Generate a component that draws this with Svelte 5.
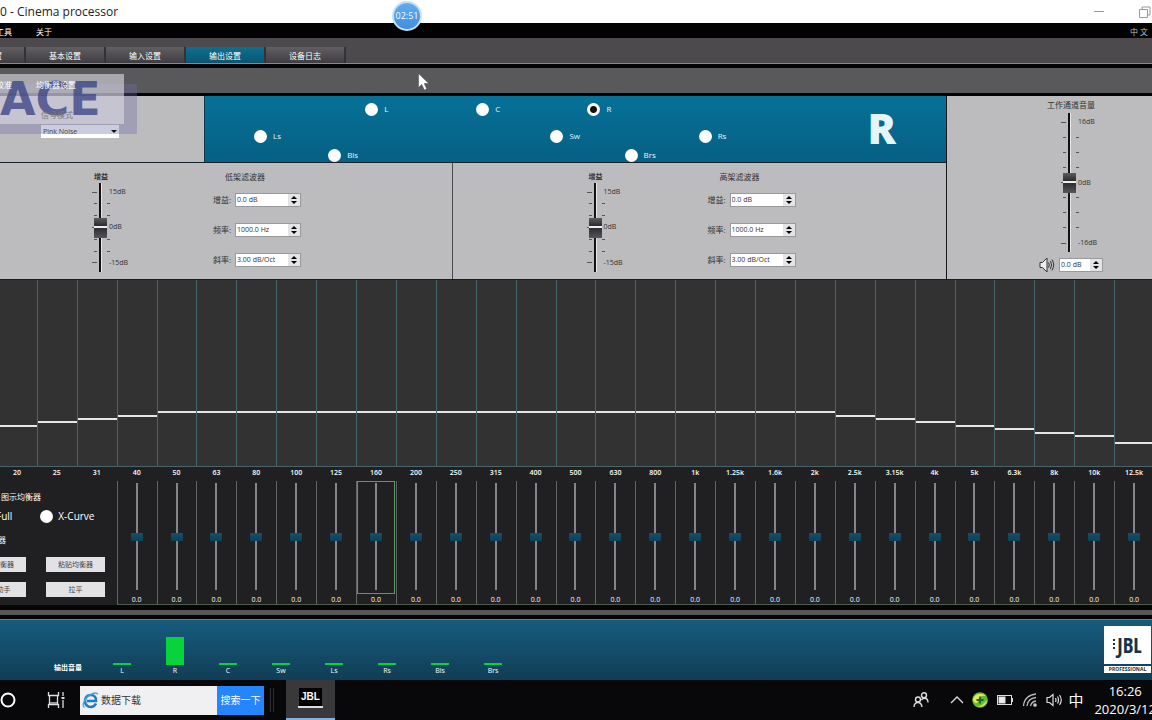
<script lang="ts">
	type Channel = { name: string; col: number; row: number };

	const tabs = ['基本设置', '输入设置', '输出设置', '设备日志'];
	let activeTab = $state('输出设置');

	const channels: Channel[] = [
		{ name: 'L', col: 5, row: 1 },
		{ name: 'C', col: 8, row: 1 },
		{ name: 'R', col: 11, row: 1 },
		{ name: 'Ls', col: 2, row: 2 },
		{ name: 'Sw', col: 10, row: 2 },
		{ name: 'Rs', col: 14, row: 2 },
		{ name: 'Bls', col: 4, row: 3 },
		{ name: 'Brs', col: 12, row: 3 },
	];
	let channel = $state('R');
	let curve = $state('');

	const filters = [
		{ id: 'low', title: '低架滤波器' },
		{ id: 'high', title: '高架滤波器' },
	];
	const fields = [
		{ label: '增益:', value: '0.0 dB' },
		{ label: '频率:', value: '1000.0 Hz' },
		{ label: '斜率:', value: '3.00 dB/Oct' },
	];
	const shelfScale = ['15dB', '', '', '0dB', '', '', '-15dB'];
	const volumeScale = ['16dB', '', '', '', '0dB', '', '', '', '-16dB'];

	const freqs = [
		'20', '25', '31', '40', '50', '63', '80', '100', '125', '160',
		'200', '250', '315', '400', '500', '630', '800', '1k', '1.25k', '1.6k',
		'2k', '2.5k', '3.15k', '4k', '5k', '6.3k', '8k', '10k', '12.5k',
	];
	const levels = [
		-4, -3, -2, -1, 0, 0, 0, 0, 0, 0,
		0, 0, 0, 0, 0, 0, 0, 0, 0, 0,
		0, -1, -2, -3, -4, -5, -6, -7, -9,
	];
	let bands = $state(freqs.slice(3).map((freq) => ({ freq, gain: 0 })));
	let selected = $state('160');

	const meters = [
		{ name: 'L', level: 2 },
		{ name: 'R', level: 28 },
		{ name: 'C', level: 2 },
		{ name: 'Sw', level: 2 },
		{ name: 'Ls', level: 2 },
		{ name: 'Rs', level: 2 },
		{ name: 'Bls', level: 2 },
		{ name: 'Brs', level: 2 },
	];

	// 0 dB sits at 29.5% of the plot height
	function levelHeight(db: number) {
		return 29.5 + db * 1.85;
	}
</script>

{#snippet fader(label: string, scale: string[], max: number)}
	<div class="fader">
		<div class="ticks left">
			{#each scale as mark}
				<div class="tick-row"><i class="tick" class:major={mark}></i></div>
			{/each}
		</div>
		<input type="range" class="fader-input" class:tall={max === 16} aria-label={label} min={-max} {max} value="0" />
		<div class="ticks">
			{#each scale as mark}
				<div class="tick-row"><i class="tick" class:major={mark}></i><span>{mark}</span></div>
			{/each}
		</div>
	</div>
{/snippet}

{#snippet spin(id: string, value: string)}
	<div class="spin">
		<input type="text" {id} {value} />
		<div class="spin-btns">
			<button aria-label="+"><svg viewBox="0 0 6 3"><path d="M0 3L3 0L6 3Z" /></svg></button>
			<button aria-label="-"><svg viewBox="0 0 6 3"><path d="M0 0L3 3L6 0Z" /></svg></button>
		</div>
	</div>
{/snippet}

<div class="window">
	<header class="titlebar">
		<span>0 - Cinema processor</span>
		<div class="win-btns">
			<button aria-label="最小化"><svg width="12" height="12" viewBox="0 0 12 12"><path d="M1 5.5H11" /></svg></button>
			<button aria-label="还原"><svg width="12" height="12" viewBox="0 0 12 12"><path d="M.5 3.5H8.500V11.500H.5ZM3 3V1H11V9H9" /></svg></button>
		</div>
	</header>

	<nav class="menubar">
		<button>工具</button>
		<button>关于</button>
		<button class="lang">中 文</button>
	</nav>

	<nav class="tabs">
		<button class="tab first">置</button>
		{#each tabs as tab}
			<button class="tab" class:active={tab === activeTab} onclick={() => (activeTab = tab)}>{tab}</button>
		{/each}
	</nav>

	<nav class="subtabs">
		<button>校准</button>
		<button>均衡器设置</button>
	</nav>

	<div class="main">
		<div class="top">
			<section class="signal">
				<label for="signal">信号模式</label>
				<div class="combo">
					<select id="signal"><option>Pink Noise</option></select>
					<svg width="6" height="3" viewBox="0 0 6 3"><path d="M0 0L3 3L6 0Z" /></svg>
				</div>
			</section>
			<section class="channels">
				{#each channels as ch}
					<label class="channel" style="grid-area: {ch.row} / {ch.col} / auto / span 3">
						<input type="radio" name="channel" value={ch.name} bind:group={channel} />
						{ch.name}
					</label>
				{/each}
				<strong class="current">{channel}</strong>
			</section>
		</div>

		<div class="filters">
			{#each filters as f}
				<section class="filter">
					<div class="gain">
						<h3>增益</h3>
						{@render fader('增益', shelfScale, 15)}
					</div>
					<div class="shelf">
						<h2>{f.title}</h2>
						{#each fields as field, i}
							<div class="field">
								<label for="{f.id}-{i}">{field.label}</label>
								{@render spin(`${f.id}-${i}`, field.value)}
							</div>
						{/each}
					</div>
				</section>
			{/each}
		</div>

		<section class="volume">
			<h2>工作通道音量</h2>
			{@render fader('工作通道音量', volumeScale, 16)}
			<div class="volume-row">
				<label for="volume" aria-label="音量">
					<svg width="16" height="16" viewBox="0 0 16 16" fill="none" stroke="#333">
						<path d="M1 5.500H3.500L8 1V15L3.500 10.500H1Z" fill="#eee" />
						<path d="M9.500 5.500Q11 8 9.500 10.500M11.500 4Q13.500 8 11.500 12M13 2.500Q16.500 8 13 13.500" />
					</svg>
				</label>
				{@render spin('volume', '0.0 dB')}
			</div>
		</section>
	</div>

	<div class="plot bands-grid">
		{#each levels as db}
			<div class="plot-col"><div class="level" style="height: {levelHeight(db)}%"></div></div>
		{/each}
	</div>

	<div class="eq">
		<div class="freqs bands-grid">
			{#each freqs as freq}
				<span>{freq}</span>
			{/each}
		</div>
		<div class="bands-grid">
			<section class="eq-panel">
				<h2>图示均衡器</h2>
				<div class="curves">
					<label><input type="radio" name="curve" value="full" bind:group={curve} />Full</label>
					<label><input type="radio" name="curve" value="x" bind:group={curve} />X-Curve</label>
				</div>
				<h2 class="cut">均衡器</h2>
				<div class="eq-btns">
					<button>复制均衡器</button>
					<button>粘贴均衡器</button>
					<button>均衡助手</button>
					<button>拉平</button>
				</div>
			</section>
			{#each bands as band}
				<div class="band">
					<div class="band-box" class:selected={band.freq === selected}>
						<input
							type="range"
							class="band-input"
							aria-label={band.freq}
							min="-6"
							max="6"
							step="0.5"
							bind:value={band.gain}
							onfocus={() => (selected = band.freq)}
						/>
					</div>
					<output>{band.gain.toFixed(1)}</output>
				</div>
			{/each}
		</div>
	</div>

	<div class="divider"></div>

	<footer class="output">
		<strong>输出音量</strong>
		<div class="meters">
			{#each meters as m}
				<div class="meter">
					<div class="meter-bar" style="height: {m.level}px"></div>
					<span>{m.name}</span>
				</div>
			{/each}
		</div>
		<div class="brand">
			<div class="brand-name">
				<i class="dots"></i>JBL
			</div>
			<div class="brand-sub">PROFESSIONAL</div>
		</div>
	</footer>

	<div class="taskbar">
		<button class="cortana" aria-label="Cortana">
			<svg width="16" height="16" viewBox="0 0 16 16"><circle cx="8" cy="8" r="6.500" fill="none" stroke="#fff" stroke-width="2" /></svg>
		</button>
		<button class="taskview" aria-label="任务视图">
			<svg width="18" height="18" viewBox="0 0 18 18" fill="none" stroke="#ddd" stroke-width="1.300">
				<path d="M1.500 1V4.500H11.500V1M1.500 17V13.500H11.500V17M2.500 4.500V13.500M10.500 4.500V13.500M16 1V5M16 9V17" />
				<path d="M14.500 7H17.500" stroke-width="2" />
				<path d="M3 12H10" stroke="#999" stroke-width="2" />
			</svg>
		</button>
		<form class="search" onsubmit={(e) => e.preventDefault()}>
			<svg width="17" height="17" viewBox="0 0 17 17" fill="none">
				<path d="M14 11.500C12.500 14.500 10.500 15 8.800 15C5.500 15 3 12.500 3 9C3 5.500 5.500 3 8.800 3C12.500 3 14.500 5.800 14 9H5" stroke="#1c7cc4" stroke-width="2.600" />
				<path d="M2.500 15.500C-.5 13.500 2.500 6.500 8 3C12 .5 15.500 .5 15.500 2.500" stroke="#45a9e0" stroke-width="1.400" />
			</svg>
			<input type="text" aria-label="搜索" value="数据下载" />
			<button>搜索一下</button>
		</form>
		<i class="grip"></i>
		<button class="app" aria-label="Cinema processor">
			<span class="app-icon">JBL</span>
			<i class="app-line"></i>
		</button>
		<div class="tray">
			<svg class="people" width="16" height="16" viewBox="0 0 16 16" fill="none" stroke="#ddd" stroke-width="1.400">
				<circle cx="5" cy="7.500" r="2.500" /><path d="M1 15C1 11.500 3 10.500 5 10.500S8.500 11.500 9 15" />
				<circle cx="11" cy="3.300" r="2.500" /><path d="M8.500 8C9.500 6.500 10.300 6.200 11.500 6.200C13.500 6.200 15 7.500 15 10.500" />
			</svg>
			<svg width="14" height="16" viewBox="0 0 14 16" fill="none" stroke="#ddd" stroke-width="1.300"><path d="M1 11L7 5L13 11" /></svg>
			<svg width="16" height="16" viewBox="0 0 16 16">
				<circle cx="8" cy="8" r="7.800" fill="#63bb35" />
				<path d="M1 8C1 3 9 -1 14 4C10 3 7 5 6 9C5 12 3 12 1 8Z" fill="#e6e85a" />
				<path d="M15.500 8C15 13 10 16 5 14.500C10 14 12 11 15.500 8Z" fill="#d8df47" />
				<path d="M8 4.500V11.500M4.500 8H11.500" stroke="#17652d" stroke-width="1.800" />
			</svg>
			<svg width="18" height="16" viewBox="0 0 18 16" fill="none" stroke="#ddd">
				<rect x="1.500" y="3.500" width="14" height="9" /><path d="M16.500 6V10" /><rect x="3" y="5" width="6" height="6" fill="#eee" />
			</svg>
			<svg width="16" height="16" viewBox="0 0 16 16" fill="none" stroke="#bbb" stroke-width="1.300">
				<path d="M1.500 14C2 7 7 2.500 14 2M5 14C5.500 9 9 6 14 5.500M8.500 14C9 11.500 10.500 9.500 14 9" /><circle cx="13" cy="13" r="1.200" fill="#eee" />
			</svg>
			<svg width="17" height="16" viewBox="0 0 17 16" fill="none" stroke="#ddd" stroke-width="1.200">
				<path d="M1 5.500H3.500L7 2.500V13.500L3.500 10.500H1ZM9.500 6Q10.500 8 9.500 10M11.500 4.500Q13.500 8 11.500 11.500M13.500 3Q17 8 13.500 13" />
			</svg>
			<span class="ime">中</span>
			<div class="clock"><span>16:26</span><span>2020/3/12</span></div>
		</div>
	</div>

	<div class="watermark"><div class="watermark-card">ACE</div></div>
	<div class="timer">02:51</div>
	<svg class="cursor" width="12" height="18" viewBox="0 0 12 18"><path d="M.5 .5V14.500L3.800 11.500L6.300 17L8.800 16L6.300 10.500H10.800Z" fill="#fff" stroke="#555" stroke-width=".6" /></svg>
</div>

<style>
	:global(body) {
		margin: 0;
		background: #08070a;
	}
	.window {
		position: relative;
		overflow: hidden;
		font-family: 'Open Sans', 'Noto Sans CJK SC', sans-serif;
		font-size: 8px;
		line-height: 12px;
		color: #fff;
	}
	.window :is(button, input, select) {
		box-sizing: border-box;
		margin: 0;
		padding: 0;
		border: 0;
		font: inherit;
		color: inherit;
		background: none;
	}
	h2, h3 {
		margin: 0;
		font-size: 8px;
		font-weight: 400;
	}
	h3 {
		font-size: 7px;
		font-weight: 700;
	}
	svg {
		display: block;
		flex-shrink: 0;
	}
	.titlebar {
		display: flex;
		justify-content: space-between;
		align-items: center;
		height: 23px;
		background: #fff;
		color: #222;
		font-size: 12px;
	}
	.win-btns {
		display: flex;
		gap: 34px;
		padding-right: 1px;
	}
	.win-btns svg {
		fill: none;
		stroke: #999;
	}
	.menubar {
		display: flex;
		align-items: center;
		gap: 24px;
		height: 13px;
		margin-left: -4px;
		padding-top: 2px;
		background: #020203;
	}
	.menubar .lang {
		margin-left: auto;
		padding-right: 4px;
		color: #a9c4c8;
	}
	.tabs {
		display: flex;
		align-items: flex-end;
		height: 25px;
		background: #4d4a4d;
		border-bottom: 1px solid #8a888a;
	}
	.window .tab {
		width: 80px;
		height: 16px;
		padding-top: 2px;
		border-right: 2px solid #343236;
		background: linear-gradient(#625f63, #3f3d41);
	}
	.window .tab.first {
		width: 26px;
		text-align: left;
		text-indent: -6px;
	}
	.window .tab.active {
		background: linear-gradient(#0f6f90, #0a5573);
	}
	.subtabs {
		display: flex;
		align-items: center;
		gap: 24px;
		height: 16px;
		padding-top: 9px;
		border-top: 4px solid #040404;
		border-bottom: 3px solid #040404;
		background: #59585a;
	}
	/* the texts stay readable above the translucent watermark */
	.subtabs button,
	.signal label,
	.combo select,
	.combo svg {
		position: relative;
		z-index: 1;
	}
	.subtabs button:first-child {
		margin-left: -4px;
	}

	.main {
		display: grid;
		grid-template-columns: minmax(0, 1fr) 206px;
		grid-template-rows: 67px 116px;
		background: #bcbbbd;
		color: #333;
		border-bottom: 1px solid #1b1b1e;
	}
	.top {
		display: grid;
		grid-template-columns: 204px 1fr;
		border-bottom: 1px solid #16222c;
	}
	.signal {
		padding: 13px 0 0 41px;
		color: #777;
	}
	.signal label {
		display: block;
		padding-bottom: 4px;
	}
	.combo {
		display: flex;
		align-items: center;
		width: 78px;
		height: 13px;
		background: #fff;
		color: #444;
		font-size: 7px;
	}
	.window .combo select {
		flex: 1;
		height: 13px;
		padding-left: 2px;
		appearance: none;
	}
	.combo svg {
		margin-right: 2px;
		fill: #111;
	}
	.channels {
		display: grid;
		grid-template-columns: repeat(20, minmax(0, 1fr));
		grid-template-rows: 26px 28px 10px;
		align-items: center;
		background: linear-gradient(#067197, #075f84);
		color: #e4f6fb;
		border-left: 1px solid #0c3c50;
	}
	.channel {
		display: flex;
		align-items: center;
		gap: 6px;
		padding-left: 12px;
	}
	.window input[type='radio'] {
		appearance: none;
		flex-shrink: 0;
		width: 13px;
		height: 13px;
		border-radius: 50%;
		background: #fff;
	}
	.window input[type='radio']:checked {
		background: radial-gradient(circle, #111 3px, #fff 4px);
	}
	.current {
		grid-area: 1 / 17 / 4 / 21;
		justify-self: end;
		padding-right: 50px;
		font-size: 42px;
		font-weight: 800;
		line-height: 42px;
	}

	.filters {
		grid-row: 2;
		display: grid;
		grid-template-columns: 1fr 1fr;
		margin-left: -43px;
	}
	.filter {
		display: grid;
		grid-template-columns: 121px auto;
		justify-content: start;
		padding: 8px 0 0 135px;
	}
	.filter + .filter {
		padding-left: 134px;
		border-left: 1px solid #4c4b50;
	}
	.gain h3 {
		padding-left: 2px;
	}
	.shelf h2 {
		padding: 0 0 10px 12px;
	}
	.field {
		display: flex;
		align-items: center;
		gap: 4px;
		height: 14px;
		margin-bottom: 16px;
	}
	.field:last-child {
		margin-bottom: 0;
	}
	.field label {
		width: 18px;
		white-space: nowrap;
	}
	.spin {
		display: flex;
		height: 14px;
		box-sizing: border-box;
		border: 1px solid #99989c;
		background: #fff;
		font-size: 7px;
	}
	.window .spin input {
		width: 52px;
		padding-left: 1px;
	}
	.spin-btns {
		display: flex;
		flex-direction: column;
		justify-content: center;
		gap: 2px;
		width: 12px;
		background: #e4e3e6;
	}
	.spin-btns button {
		display: flex;
		justify-content: center;
	}
	.spin-btns svg {
		width: 6px;
		height: 3px;
		fill: #000;
	}

	.fader {
		display: flex;
		font-size: 7px;
	}
	.ticks {
		display: flex;
		flex-direction: column;
		justify-content: space-between;
		width: 12px;
		padding: 4px 0;
	}
	.ticks.left {
		width: 5px;
		margin-right: -3px;
		align-items: flex-end;
	}
	.tick-row {
		display: flex;
		align-items: center;
		gap: 2px;
		height: 10px;
		white-space: nowrap;
	}
	.tick {
		width: 3px;
		height: 1px;
		background: #555;
	}
	.tick.major {
		width: 5px;
	}
	.window .fader-input {
		writing-mode: vertical-lr;
		direction: rtl;
		appearance: none;
		width: 13px;
		height: 89px;
		background: linear-gradient(90deg, #111 2px, #e8e8ea 2px) center / 3px 100% no-repeat;
	}
	.window .fader-input.tall {
		height: 139px;
	}
	.fader-input::-webkit-slider-thumb {
		appearance: none;
		width: 13px;
		height: 20px;
		background: linear-gradient(#5c5c60, #2b2b2e 8px, #eee 8px, #eee 10px, #2e2e31 10px, #55555a);
	}

	.volume {
		grid-area: 1 / 2 / 3 / 3;
		padding: 3px 0 0 92px;
		border-left: 1px solid #16161a;
	}
	.volume h2 {
		padding: 0 0 2px 8px;
	}
	.volume .fader {
		padding-left: 22px;
	}
	.volume-row {
		display: flex;
		align-items: center;
		gap: 4px;
		padding-top: 5px;
	}
	.window .volume-row input {
		width: 30px;
	}

	.bands-grid {
		display: grid;
		grid-template-columns: repeat(29, minmax(0, 1fr));
		margin: 0 -2px 0 -3px;
	}
	.plot {
		height: 186px;
		background: #323233;
		border-bottom: 1px solid #48646b;
	}
	.plot-col {
		display: flex;
		align-items: flex-end;
		border-left: 1px solid #46646c;
	}
	.level {
		flex: 1;
		box-sizing: border-box;
		border-top: 2px solid #e6e6e6;
	}
	.eq {
		background: #202023;
		font-size: 7px;
	}
	.freqs {
		height: 14px;
		text-align: center;
		font-weight: 600;
	}
	.eq-panel {
		grid-column: span 3;
		padding: 10px 0 0 4px;
		overflow: hidden;
	}
	.curves {
		display: flex;
		gap: 28px;
		margin: 5px 0 10px -23px;
		font-size: 10px;
		line-height: 16px;
	}
	.curves label {
		display: flex;
		align-items: center;
		gap: 5px;
	}
	.cut {
		margin-left: -19px;
	}
	.eq-btns {
		display: grid;
		grid-template-columns: 59px 59px;
		gap: 10px 20px;
		margin: 11px 0 0 -34px;
	}
	.window .eq-btns button {
		height: 15px;
		background: #e2e1e4;
		color: #444;
	}
	.band {
		padding-right: 1px;
		border-left: 1px solid #626465;
		border-bottom: 1px solid #4c5c50;
		text-align: center;
	}
	.band-box {
		display: flex;
		justify-content: center;
		height: 111px;
		border: 1px solid transparent;
	}
	.band-box.selected {
		border-color: #5c9a62;
	}
	.band output {
		display: block;
		padding-top: 2px;
		line-height: 8px;
	}
	.window .band-input {
		writing-mode: vertical-lr;
		direction: rtl;
		appearance: none;
		width: 12px;
		height: 107px;
		margin-top: 1px;
		background: linear-gradient(#858587, #858587) center / 2px 100% no-repeat;
	}
	.band-input::-webkit-slider-thumb {
		appearance: none;
		width: 12px;
		height: 8px;
		background: linear-gradient(#12506d, #0e3f58);
	}

	.divider {
		height: 5px;
		border-top: 5px solid #060607;
		border-bottom: 4px solid #060607;
		background: #59565a;
	}
	.output {
		display: flex;
		align-items: flex-end;
		height: 60px;
		border-top: 1px solid #66808c;
		background: linear-gradient(#165c7d, #113d56);
		font-size: 7px;
	}
	.output strong {
		padding: 0 0 6px 54px;
	}
	.meters {
		display: flex;
		align-items: flex-end;
		gap: 13px;
		padding: 0 0 3px 20px;
	}
	.meter {
		display: flex;
		flex-direction: column;
		align-items: center;
		width: 40px;
	}
	.meter-bar {
		width: 18px;
		background: #08d33c;
	}
	.brand {
		align-self: flex-start;
		width: 47px;
		margin: 6px 1px 0 auto;
		color: #123349;
		text-align: center;
	}
	.brand-name {
		display: flex;
		justify-content: center;
		align-items: center;
		gap: 2px;
		height: 38px;
		margin-bottom: 2px;
		background: #fff;
		font: 700 21px 'Liberation Sans Narrow', 'Open Sans Condensed', 'Liberation Sans', sans-serif;
	}
	.dots {
		width: 2px;
		height: 12px;
		background: repeating-linear-gradient(#123349 0 2px, #fff 2px 4px);
	}
	.brand-sub {
		background: #fff;
		font-size: 5px;
		font-weight: 700;
		line-height: 7px;
	}

	.taskbar {
		display: flex;
		align-items: center;
		height: 40px;
		background: #08070a;
	}
	.window .taskview {
		margin-left: 31px;
	}
	.search {
		display: flex;
		align-items: center;
		width: 184px;
		height: 29px;
		margin-left: 15px;
		background: #f0eff1;
		font-size: 10px;
	}
	.search svg {
		margin: 0 2px;
	}
	.window .search input {
		flex: 1;
		min-width: 0;
		color: #333;
	}
	.window .search button {
		width: 47px;
		height: 29px;
		background: #2585ff;
	}
	.grip {
		width: 2px;
		height: 24px;
		margin: 0 12px 0 6px;
		border: solid #2e2d31;
		border-width: 0 1px;
	}
	.window .app {
		display: flex;
		flex-direction: column;
		align-items: center;
		width: 49px;
		height: 40px;
		padding-top: 8px;
		border-bottom: 2px solid #7fb2e6;
		background: #39393c;
	}
	.app-icon {
		width: 23px;
		height: 18px;
		background: #000;
		font: 700 10px/18px 'Liberation Sans Narrow', 'Liberation Sans', sans-serif;
	}
	.app-line {
		width: 25px;
		height: 2px;
		background: #ddd;
	}
	.tray {
		display: flex;
		align-items: center;
		gap: 8px;
		margin: 0 -4px 0 auto;
	}
	.people {
		margin-right: 13px;
	}
	.ime {
		margin: 0 3px 0 -3px;
		font-size: 15px;
		line-height: 20px;
	}
	.clock {
		display: flex;
		flex-direction: column;
		align-items: center;
		font-size: 13px;
		line-height: 18px;
	}

	.watermark {
		position: absolute;
		top: 84px;
		left: 0;
		width: 137px;
		height: 50px;
		background: rgba(110, 110, 170, 0.35);
		pointer-events: none;
	}
	.watermark-card {
		width: 124px;
		height: 50px;
		margin-top: -10px;
		background: rgba(225, 222, 228, 0.6);
		color: rgba(55, 65, 130, 0.75);
		font: 700 46px/50px 'DejaVu Sans', sans-serif;
	}
	.timer {
		position: absolute;
		top: 1px;
		left: 392px;
		width: 26px;
		height: 26px;
		border: 2px solid #c6e0f7;
		border-radius: 50%;
		background: linear-gradient(#62adee, #3f8ee0);
		font-size: 9px;
		line-height: 26px;
		text-align: center;
	}
	.cursor {
		position: absolute;
		top: 73px;
		left: 418px;
	}
</style>
